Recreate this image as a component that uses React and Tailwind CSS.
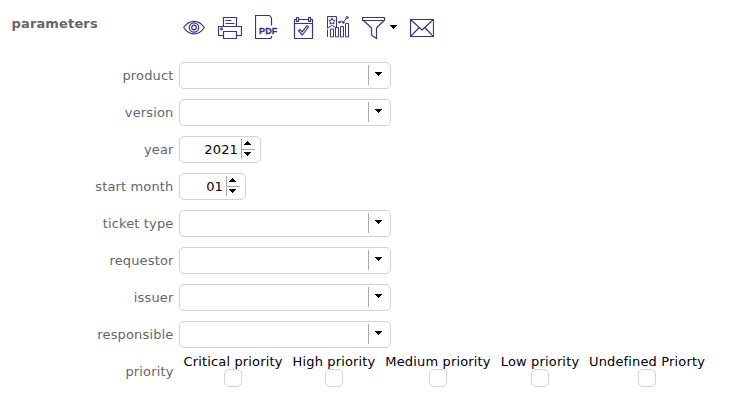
import React from 'react';

const ink = '#35358f';

function Icon({ width, className, children }) {
  return (
    <svg
      width={width}
      height="26"
      viewBox={`0 0 ${width} 26`}
      fill="none"
      stroke={ink}
      strokeWidth="1.2"
      strokeLinejoin="round"
      strokeLinecap="round"
      className={`shrink-0 ${className || ''}`}
    >
      {children}
    </svg>
  );
}

function EyeIcon() {
  return (
    <Icon width={22}>
      <path d="M.7 12.500C3.500 8.400 7 6.300 11 6.300s7.500 2.100 10.300 6.200C18.500 16.800 15 18.900 11 18.900S3.500 16.800.7 12.500Z" />
      <circle cx="11" cy="12.500" r="4.700" />
      <circle cx="11" cy="12.500" r="2.300" />
    </Icon>
  );
}

function PrinterIcon() {
  return (
    <Icon width={24} className="ml-[13px]">
      <path d="M5.500 11.500v-9h13v9M8 5.500h5M8 8.500h8" />
      <path d="M5.500 20.500h-5v-9h23v9h-5" />
      <path d="M5.500 16.500h13v7h-13z" />
      <circle cx="3.500" cy="14" r=".8" />
    </Icon>
  );
}

function PdfIcon() {
  return (
    <Icon width={24} className="ml-[13px]">
      <path d="M16.500 10V3l-2-2.500H.5v23h15l1-1v-1" />
      <text
        x="4"
        y="19.400"
        fill={ink}
        stroke={ink}
        strokeWidth=".3"
        fontFamily="Liberation Sans, sans-serif"
        fontWeight="700"
        fontSize="9.200"
        textLength="18.500"
        lengthAdjust="spacingAndGlyphs"
      >
        PDF
      </text>
    </Icon>
  );
}

function CalendarIcon() {
  return (
    <Icon width={21} className="ml-[14px]">
      <path d="M3 4.500H1.500v19h18v-19H18M6 4.500h9M1.500 8.500h18" />
      <path d="M3.500 2.500h2v4h-2zM15.500 2.500h2v4h-2z" />
      <path d="m5.500 15.800 1.400-1.300 2.300 2.300 4.700-6 1.600 1.200-6.100 8z" />
    </Icon>
  );
}

function StatsIcon() {
  return (
    <Icon width={23} className="ml-[13px]">
      <path d="M.5 13V1.500h9V13L5 10.500z" strokeWidth="1" />
      <path d="m5 3.200 1 2 2.200.2-1.600 1.500.5 2.100L5 8l-2.100 1 .5-2.100-1.600-1.500 2.200-.2z" strokeWidth="1" />
      <path d="M.5 15v6.500M3.500 21.500V14h3v7.500zM8.500 21.500v-9h3v9zM13.500 21.500v-10h3v10zM18.500 21.500v-13h3v13z" strokeWidth="1" />
      <path d="m12.700 7 1.500-1 2 1.500 3.600-4.700" strokeWidth="1" />
      <circle cx="12.200" cy="7.300" r=".8" strokeWidth="1" />
      <circle cx="16.300" cy="7.500" r=".8" strokeWidth="1" />
      <circle cx="20.200" cy="2.500" r="1" strokeWidth="1" />
    </Icon>
  );
}

function FunnelIcon() {
  return (
    <Icon width={24} className="ml-3">
      <path d="M.5 2.500h22v3H.5zM1.500 5.500l8 7.500v7l5 3.500V13l7.500-7.500" />
    </Icon>
  );
}

function MailIcon() {
  return (
    <Icon width={24} className="ml-[13px]">
      <path d="M.5 4.500h23v17H.5zM.5 4.500 12 15 23.500 4.500M.5 21.500l8.800-9M23.500 21.500l-8.800-9" />
    </Icon>
  );
}

function Arrow({ up, className }) {
  return (
    <svg
      width="7"
      height="4"
      viewBox="0 0 7 4"
      fill="#000"
      shapeRendering="crispEdges"
      className={`shrink-0 ${className || ''}`}
    >
      <path d={up ? 'M3 0h1v1H3zM2 1h3v1H2zM1 2h5v1H1zM0 3h7v1H0z' : 'M0 0h7v1H0zM1 1h5v1H1zM2 2h3v1H2zM3 3h1v1H3z'} />
    </svg>
  );
}

function Row({ label, children }) {
  return (
    <div className="flex h-[27px] items-center">
      <div className="w-[173.5px] shrink-0 text-right leading-4 text-[#666]">{label}</div>
      <div className="ml-[5.5px]">{children}</div>
    </div>
  );
}

function Select() {
  return (
    <div className="flex h-[27px] w-[212px] justify-end rounded-[5px] border border-[#d3d3d3] bg-white pt-0.5">
      <div className="flex h-5 w-[22px] border-l border-[#aaa] pt-[7px] pl-1.5">
        <Arrow />
      </div>
    </div>
  );
}

function Spinner({ value, width }) {
  return (
    <div className={`flex h-[27px] justify-end rounded-[5px] border border-[#d3d3d3] bg-white pt-0.5 ${width}`}>
      <div className="mr-[3px] pt-[3px] leading-4 text-black">{value}</div>
      <div className="mr-[5px] flex h-5 w-3.5 flex-col border-l border-[#aaa]">
        <div className="flex h-[11px] items-start border-b border-[#aaa] pt-0.5 pl-0.5">
          <Arrow up />
        </div>
        <div className="pt-0.5 pl-0.5">
          <Arrow className="block" />
        </div>
      </div>
    </div>
  );
}

const priorities = [
  { name: 'Critical priority', width: 'w-[98px]' },
  { name: 'High priority', width: 'w-[82px]' },
  { name: 'Medium priority', width: 'w-[104px]' },
  { name: 'Low priority', width: 'w-[78px]' },
  { name: 'Undefined Priorty', width: 'w-[114px]' },
];

export default function App() {
  return (
    <div className="h-[414px] w-[732px] overflow-hidden bg-white font-['Verdana','DejaVu_Sans',sans-serif] text-[13px] tracking-[0.15px]">
      <header className="flex h-[62px] items-start">
        <h1 className="w-[183px] shrink-0 pt-4 pl-[11.5px] leading-4 font-bold text-[#666]">parameters</h1>
        <div className="flex items-center pt-[15px]">
          <EyeIcon />
          <PrinterIcon />
          <PdfIcon />
          <CalendarIcon />
          <StatsIcon />
          <FunnelIcon />
          <Arrow className="mb-0.5 ml-1" />
          <MailIcon />
        </div>
      </header>
      <div className="flex flex-col gap-2.5">
        <Row label="product"><Select /></Row>
        <Row label="version"><Select /></Row>
        <Row label="year"><Spinner value="2021" width="w-[82px]" /></Row>
        <Row label="start month"><Spinner value="01" width="w-[67px]" /></Row>
        <Row label="ticket type"><Select /></Row>
        <Row label="requestor"><Select /></Row>
        <Row label="issuer"><Select /></Row>
        <Row label="responsible"><Select /></Row>
        <Row label="priority">
          <div className="flex gap-[11px] pb-0.5 pl-[5px]">
            {priorities.map((p) => (
              <label key={p.name} className={`flex flex-col items-center text-black ${p.width}`}>
                <span className="leading-[15px] whitespace-nowrap">{p.name}</span>
                <span className="size-[18px] rounded-[5px] border border-[#d3d3d3] bg-white" />
              </label>
            ))}
          </div>
        </Row>
      </div>
    </div>
  );
}
